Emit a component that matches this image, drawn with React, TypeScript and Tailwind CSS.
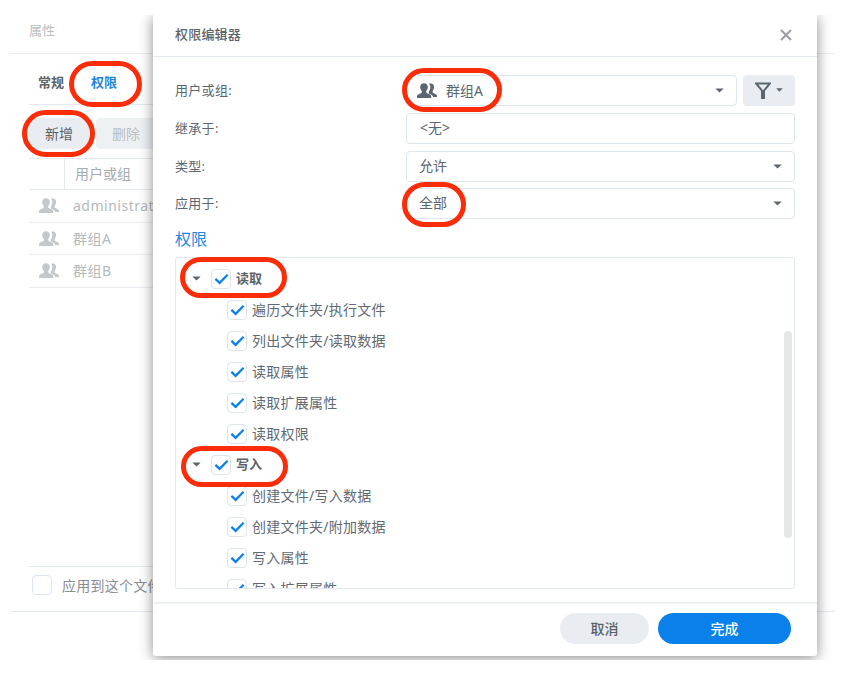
import React from 'react'

const FONT = 'font-["Noto_Sans","Noto_Sans_CJK_SC",sans-serif]'

const GroupIcon = ({ className }: { className: string }) => (
    <svg viewBox="0 0 20 15" className={className} fill="currentColor">
        <path d="M7 .2c2.300 0 3.800 1.600 3.800 3.900 0 1.600-.7 3.100-1.600 3.900v1.200c0 .8 1.600 1.300 2.900 1.800 1.300.5 2.100 1.200 2.100 2.400V15H0v-1.600c0-1.200.8-1.900 2.100-2.400 1.300-.5 2.700-1 2.700-1.800V8C3.900 7.200 3.200 5.700 3.200 4.100 3.200 1.800 4.700.2 7 .2z" />
        <path d="M13.800.5c2 0 3.300 1.500 3.300 3.600 0 1.500-.7 2.900-1.400 3.600v1.500c0 .7 1.100 1.100 2.200 1.600 1.200.5 2.100 1 2.100 2.200V14h-3.900c-.3-1.500-1.400-2.300-2.600-2.800-.8-.3-1.700-.7-1.700-1V8.500c.9-1 1.500-2.600 1.500-4.300 0-1.500-.5-2.800-1.400-3.500.6-.1 1.200-.2 1.900-.2z" />
    </svg>
)

const Caret = ({ className }: { className: string }) => (
    <svg viewBox="0 0 10 6" className={className} fill="currentColor">
        <path d="M0 .5h10L5 5.500z" />
    </svg>
)

const Check = () => (
    <div className="w-5 h-5 shrink-0 rounded-[4px] border border-[#dde5ee] bg-white flex items-center justify-center">
        <svg viewBox="0 0 16 12" className="w-[15px] h-[12px]" fill="none" stroke="#0a80eb" strokeWidth="2.400">
            <path d="M1.500 5.800l4.500 4.300 8.500-8.600" />
        </svg>
    </div>
)

const trees = [
    { name: '读取', items: ['遍历文件夹/执行文件', '列出文件夹/读取数据', '读取属性', '读取扩展属性', '读取权限'] },
    { name: '写入', items: ['创建文件/写入数据', '创建文件夹/附加数据', '写入属性', '写入扩展属性'] },
]

const Field = ({ label, children }: { label: string; children: React.ReactNode }) => (
    <div className="flex items-center h-[30px]">
        <div className="w-[231px] pt-[2px] text-[13px] text-[#5b6670] tracking-[0.3px]">{label}</div>
        {children}
    </div>
)

const App: React.FC = () => {
    return (
        <div className={`relative w-[845px] h-[683px] bg-white overflow-hidden ${FONT}`}>
            <div className="relative mt-[15px] h-[645px] overflow-hidden">
                {/* window behind the dialog */}
                <div className="mx-[10px] h-[597px] flex flex-col">
                    <div className="h-[39px] shrink-0 border-b border-[#e8edf2] pl-[19px] pt-[6px] text-[13px] text-[#b9bdc1]">属性</div>
                    <div className="flex-1 flex flex-col px-[19px]">
                        <div className="relative h-[51px] shrink-0 border-b border-[#e3e9f0] flex items-center pl-[9px] gap-[27px] text-[13px] font-bold pt-[7px]">
                            <span className="text-[#5c6369]">常规</span>
                            <span className="text-[#1f86e0]">权限</span>
                        </div>
                        <div className="flex gap-[7px] mt-[13px] shrink-0">
                            <div className="w-[60px] h-[31px] rounded-[4px] bg-[#e9edf1] flex items-center justify-center text-[14px] text-[#5a6168]">新增</div>
                            <div className="w-[60px] h-[31px] rounded-[4px] bg-[#eef1f4] flex items-center justify-center text-[14px] text-[#b9bec3]">删除</div>
                        </div>
                        <div className="mt-[9px] h-[32px] shrink-0 border-y border-[#e3e9f0] flex text-[14px] text-[#a5abb0]">
                            <div className="w-[36px] border-r border-[#e3e9f0]" />
                            <div className="pl-[10px] leading-[30px]">用户或组</div>
                        </div>
                        {['administrators', '群组A', '群组B'].map((name) => (
                            <div key={name} className="h-[32.500px] shrink-0 border-b border-[#e8edf2] flex items-center text-[14px] text-[#b4b9bd]">
                                <GroupIcon className="w-[20px] h-[15px] ml-[10px] mr-[14px] text-[#c4c8cb]" />
                                <span className="whitespace-nowrap tracking-[0.5px]">{name}</span>
                            </div>
                        ))}
                        <div className="mt-auto h-[45px] shrink-0 border-t border-[#e3e9f0] flex items-start pt-[8px] pl-[3px]">
                            <div className="w-5 h-5 rounded-[4px] border border-[#dde5ee]" />
                            <span className="ml-[10px] text-[14px] text-[#878d93] whitespace-nowrap tracking-[0.25px]">应用到这个文件夹</span>
                        </div>
                    </div>
                    <div className="border-t border-[#e3e9f0]" />
                </div>

                {/* dialog */}
                <div className="absolute left-[153px] top-0 w-[664px] h-[641px] bg-white rounded-b-[3px] shadow-[0_2px_14px_rgba(0,0,0,0.45)] flex flex-col">
                    <div className="h-[42px] shrink-0 border-b border-[#e3e9f0] flex items-center justify-between pl-[22px] pr-[25px]">
                        <span className="text-[13px] font-medium text-[#5c6369] tracking-[0.2px] pb-[2px]">权限编辑器</span>
                        <svg viewBox="0 0 12 12" className="w-3 h-3 mb-[2px]" stroke="#9aa1a7" strokeWidth="2.200">
                            <path d="M1 1l10 10M11 1L1 11" />
                        </svg>
                    </div>
                    <div className="flex-1 flex flex-col pl-[22px] pr-[22px] pt-[18px]">
                        <Field label="用户或组:">
                            <div className="w-[331px] h-[31px] rounded-[4px] border border-[#dde5ee] flex items-center pl-[10px] pr-[12px] text-[14px] text-[#5b6670]">
                                <GroupIcon className="w-[20px] h-[15px] text-[#5b6670]" />
                                <span className="ml-[9px]">群组A</span>
                                <Caret className="w-[9px] h-[5px] ml-auto text-[#5b6670]" />
                            </div>
                            <div className="ml-[6px] w-[52px] h-[31px] rounded-[4px] bg-[#e9edf1] flex items-center justify-center gap-[5px]">
                                <svg viewBox="0 0 16 17" className="w-[16px] h-[17px]" fill="none" stroke="#5b6670" strokeWidth="2">
                                    <path d="M1 1.500h14L9 8.500v7.500H7V8.500z" />
                                </svg>
                                <Caret className="w-[7px] h-[4px] text-[#5b6670]" />
                            </div>
                        </Field>
                        <div className="mt-[8px]">
                            <Field label="继承于:">
                                <div className="w-[389px] h-[31px] rounded-[4px] border border-[#dde5ee] flex items-center px-[13px] pb-[2px] text-[14px] text-[#5b6670]">&lt;无&gt;</div>
                            </Field>
                        </div>
                        <div className="mt-[8px]">
                            <Field label="类型:">
                                <div className="w-[389px] h-[31px] rounded-[4px] border border-[#dde5ee] flex items-center px-[12px] text-[14px] text-[#5b6670]">
                                    <span className="pb-[2px]">允许</span>
                                    <Caret className="w-[9px] h-[5px] ml-auto text-[#5b6670]" />
                                </div>
                            </Field>
                        </div>
                        <div className="mt-[7px]">
                            <Field label="应用于:">
                                <div className="w-[389px] h-[31px] rounded-[4px] border border-[#dde5ee] flex items-center px-[12px] text-[14px] text-[#5b6670]">
                                    <span className="pb-[2px]">全部</span>
                                    <Caret className="w-[9px] h-[5px] ml-auto text-[#5b6670]" />
                                </div>
                            </Field>
                        </div>
                        <div className="mt-[10px] text-[16px] leading-[22px] text-[#1f86e0]">权限</div>
                        <div className="relative mt-[7px] h-[332px] rounded-[3px] border border-[#e3e9f0] overflow-hidden">
                            <div className="pt-[5px]">
                                {trees.map((tree) => (
                                    <div key={tree.name}>
                                        <div className="h-[31px] flex items-center pl-[16px]">
                                            <Caret className="w-[9px] h-[5px] text-[#5b6670]" />
                                            <div className="w-[10px]" />
                                            <Check />
                                            <span className="ml-[5px] text-[13px] font-bold text-[#5c6369]">{tree.name}</span>
                                        </div>
                                        {tree.items.map((item) => (
                                            <div key={item} className="h-[31px] flex items-center pl-[51px]">
                                                <Check />
                                                <span className="ml-[5px] text-[14px] text-[#5f6a73] tracking-[0.25px]">{item}</span>
                                            </div>
                                        ))}
                                    </div>
                                ))}
                            </div>
                            {/* scrollbar */}
                            <div className="absolute right-[2px] top-[73px] w-2 h-[207px] rounded-full bg-[#e6e6e6]" />
                        </div>
                    </div>
                    <div className="h-[54px] shrink-0 border-t-2 border-[#eef1f4] flex items-start pt-[9px] justify-end gap-[9px] pr-[26px]">
                        <div className="w-[89px] h-[31px] rounded-full bg-[#e9edf1] flex items-center justify-center text-[14px] font-medium text-[#5a6168]">取消</div>
                        <div className="w-[133px] h-[31px] rounded-full bg-[#0a80eb] flex items-center justify-center text-[14px] font-medium text-white">完成</div>
                    </div>
                </div>
            </div>

            {/* red annotation ovals */}
            <div className="absolute left-[69px] top-[61px] w-[73px] h-[46px] rounded-full border-[5px] border-[#fb2c08]" />
            <div className="absolute left-[22px] top-[110px] w-[73px] h-[47px] rounded-full border-[5px] border-[#fb2c08]" />
            <div className="absolute left-[402px] top-[68px] w-[100px] h-[44px] rounded-full border-[5px] border-[#fb2c08]" />
            <div className="absolute left-[402px] top-[182px] w-[64px] h-[45px] rounded-full border-[5px] border-[#fb2c08]" />
            <div className="absolute left-[180px] top-[257px] w-[107px] h-[41px] rounded-full border-[5px] border-[#fb2c08]" />
            <div className="absolute left-[181px] top-[446px] w-[107px] h-[41px] rounded-full border-[5px] border-[#fb2c08]" />
        </div>
    )
}

export default App
